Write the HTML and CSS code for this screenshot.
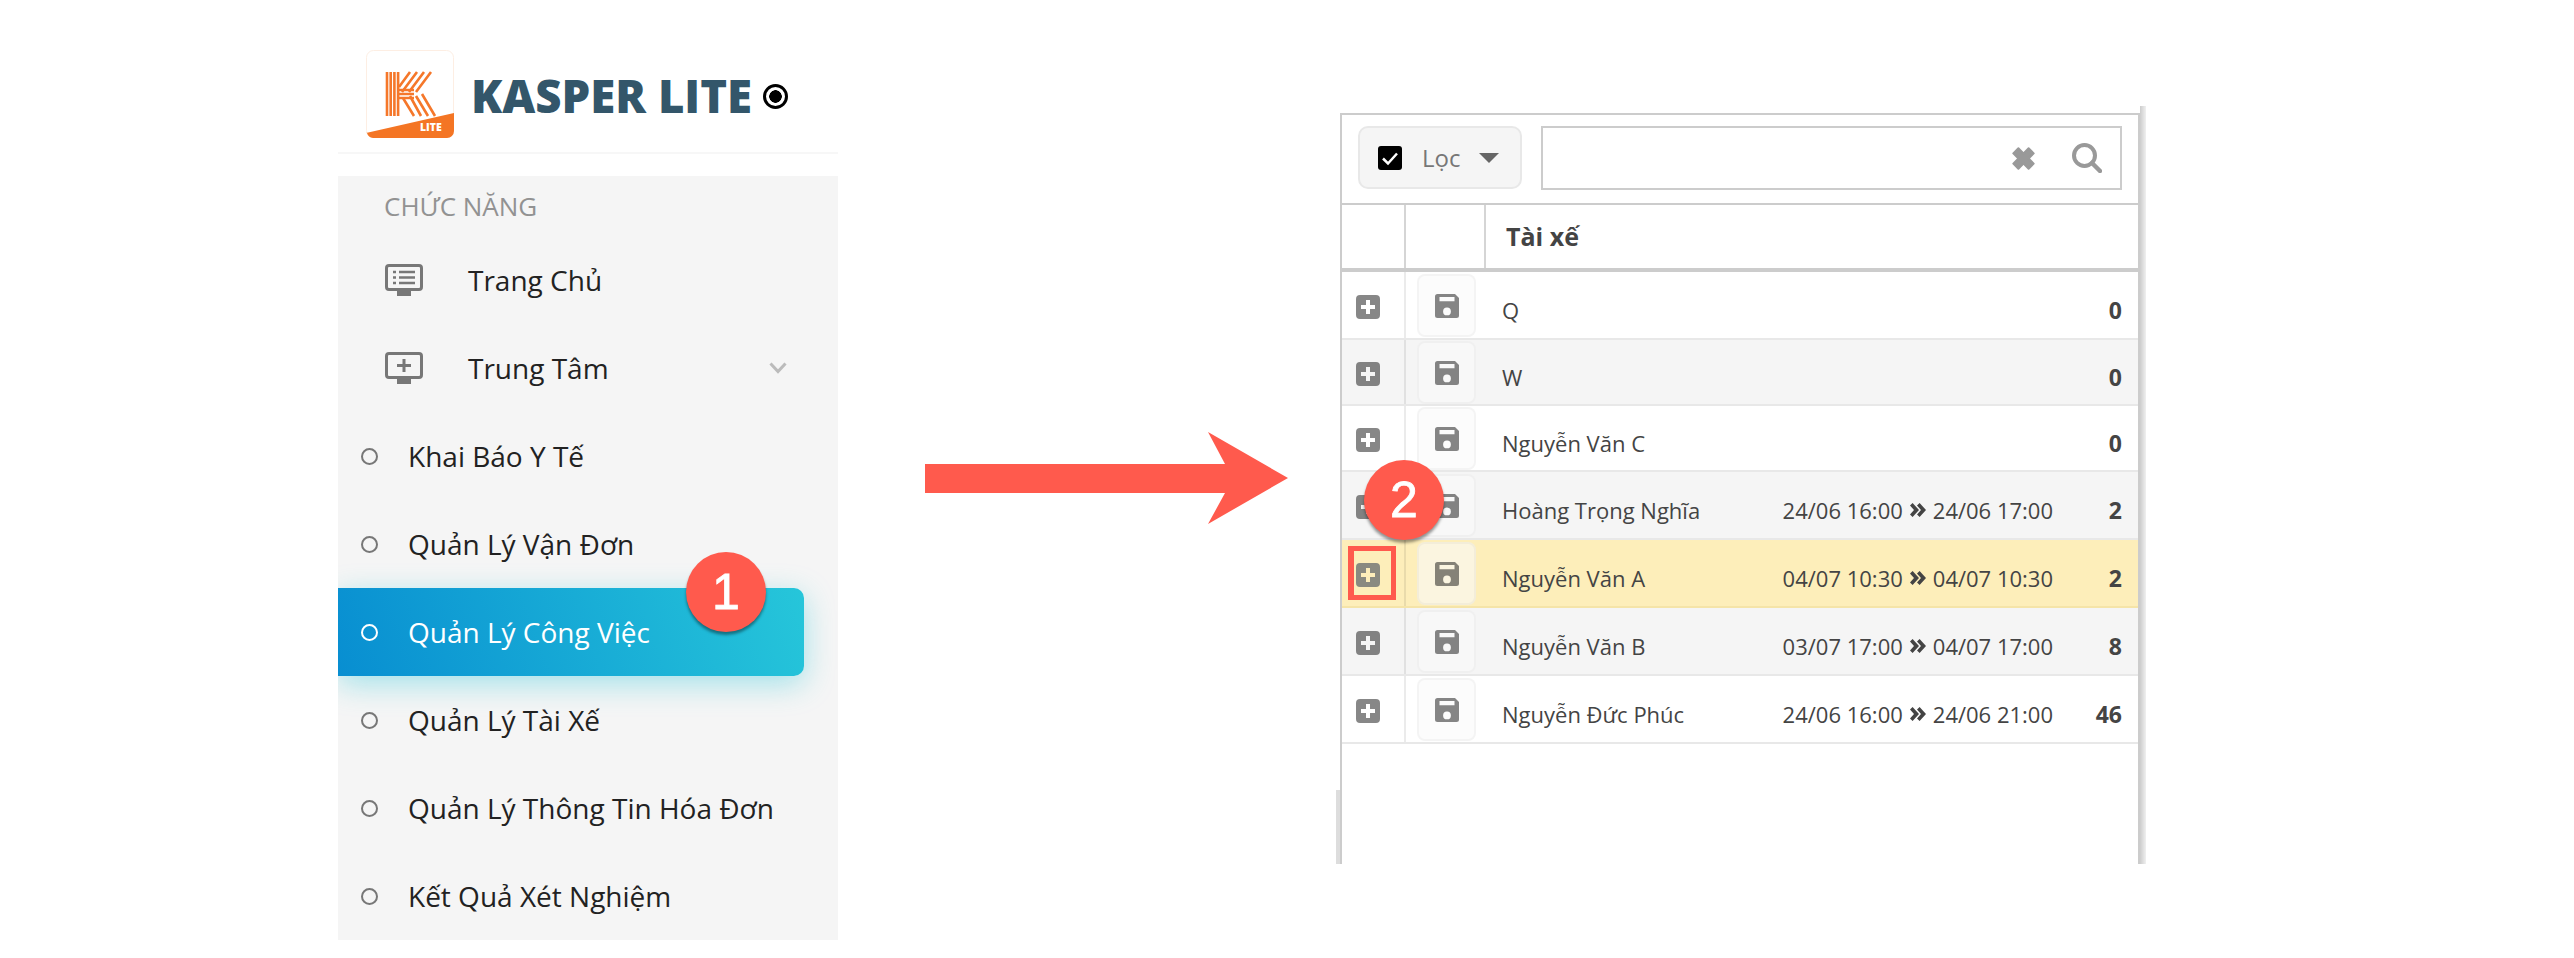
FILE: index.html
```html
<!DOCTYPE html>
<html lang="en">
<head>
  <meta charset="UTF-8">
  <meta name="viewport" content="width=device-width, initial-scale=1.0">
  <title>Kasper Lite - Quản Lý Công Việc</title>
  <link rel="stylesheet" href="styles.css">
</head>
<body>
  <svg class="sprites" width="0" height="0">
    <symbol id="i-plus" viewBox="0 0 24 24">
      <path fill-rule="evenodd" d="M4 0h16a4 4 0 0 1 4 4v16a4 4 0 0 1-4 4H4a4 4 0 0 1-4-4V4a4 4 0 0 1 4-4zM10 5v5H5v4h5v5h4v-5h5v-4h-5V5z"/>
    </symbol>
    <symbol id="i-save" viewBox="0 0 24 24">
      <path fill-rule="evenodd" d="M2.500 0H20l4 4v17.500a2.500 2.500 0 0 1-2.500 2.500h-19A2.500 2.500 0 0 1 0 21.500v-19A2.500 2.500 0 0 1 2.500 0zM4.500 3v4.300h15V3zM12 13.500a3.900 3.900 0 1 0 0 7.800 3.900 3.900 0 0 0 0-7.800z"/>
    </symbol>
    <symbol id="i-next" viewBox="0 0 16 14">
      <path d="M0 2.500 2.600 0 9 7 2.600 14 0 11.500 4 7zM7 2.500 9.600 0 16 7 9.600 14 7 11.500 11 7z"/>
    </symbol>
  </svg>

  <div class="page">
    <!-- left: sidebar -->
    <aside class="sidebar">
      <div class="brand">
        <svg class="logo" viewBox="0 0 88 88">
          <rect x="0.500" y="0.500" width="87" height="87" rx="7" fill="#fff" stroke="#fdeee3"/>
          <g stroke="#f5772a" stroke-width="2.600" fill="none">
            <path d="M21 22v44M24.700 22v44M28.400 22v44M32.100 22v44"/>
            <path d="M44 22 33 37M51 22 36 42M58 22 43 42M65 22 50 42"/>
            <path d="M33 40h15M33 44h15M33 48h15"/>
            <path d="M37 48 48 66M44 46 55 66M50 46 62 66M56 44 69 66"/>
          </g>
          <path d="M0 83 88 63v18a7 7 0 0 1-7 7H7a7 7 0 0 1-6-5z" fill="#f47524"/>
          <text class="logo-text" x="54" y="81">LITE</text>
        </svg>
        <span class="brand-name">KASPER LITE</span>
        <span class="brand-mark"></span>
      </div>

      <div class="menu">
        <div class="menu-title">CHỨC NĂNG</div>
        <div class="menu-item">
          <svg class="menu-icon" viewBox="0 0 38 32">
            <rect x="1.500" y="1.500" width="35" height="24" rx="2.500" fill="none" stroke="#777" stroke-width="3"/>
            <rect x="12" y="27" width="14" height="5" fill="#777"/>
            <path d="M8 8h3M14 8h16M8 13.500h3M14 13.500h16M8 19h3M14 19h16" stroke="#777" stroke-width="2.500"/>
          </svg>
          <span>Trang Chủ</span>
        </div>
        <div class="menu-item">
          <svg class="menu-icon" viewBox="0 0 38 32">
            <rect x="1.500" y="1.500" width="35" height="24" rx="2.500" fill="none" stroke="#777" stroke-width="3"/>
            <rect x="12" y="27" width="14" height="5" fill="#777"/>
            <path d="M12 13.500h14M19 7v13" stroke="#777" stroke-width="3"/>
          </svg>
          <span>Trung Tâm</span>
          <svg class="menu-chevron" viewBox="0 0 18 12">
            <path d="M1.500 1.500 9 9.500l7.500-8" fill="none" stroke="#bbb" stroke-width="3"/>
          </svg>
        </div>
        <div class="menu-sub"><i class="dot"></i><span>Khai Báo Y Tế</span></div>
        <div class="menu-sub"><i class="dot"></i><span>Quản Lý Vận Đơn</span></div>
        <div class="menu-sub active"><i class="dot"></i><span>Quản Lý Công Việc</span></div>
        <div class="menu-sub"><i class="dot"></i><span>Quản Lý Tài Xế</span></div>
        <div class="menu-sub"><i class="dot"></i><span>Quản Lý Thông Tin Hóa Đơn</span></div>
        <div class="menu-sub"><i class="dot"></i><span>Kết Quả Xét Nghiệm</span></div>
      </div>
      <div class="badge badge-one">1</div>
    </aside>

    <svg class="arrow" viewBox="0 0 364 92">
      <path d="M0 32H300L283 0 363 46 283 92 300 61H0z" fill="#ff5a4d"/>
    </svg>

    <!-- right: driver table -->
    <section class="panel">
      <div class="toolbar">
        <div class="filter">
          <span class="check">
            <svg viewBox="0 0 24 24"><path d="M5 12.500 10 17.500 19 7.500" fill="none" stroke="#fff" stroke-width="2.500"/></svg>
          </span>
          <span class="filter-label">Lọc</span>
          <span class="caret"></span>
        </div>
        <div class="search">
          <svg class="search-clear" viewBox="2 2 18 18">
            <path d="M3 7 7 3l4 4 4-4 4 4-4 4 4 4-4 4-4-4-4 4-4-4 4-4z" fill="#999" stroke="#999" stroke-width="1.500" stroke-linejoin="round"/>
          </svg>
          <svg class="search-go" viewBox="0 0 30 30">
            <circle cx="12.500" cy="12.500" r="10.500" fill="none" stroke="#999" stroke-width="4"/>
            <path d="M20 20l8 8" stroke="#999" stroke-width="4.500" stroke-linecap="round"/>
          </svg>
        </div>
      </div>

      <div class="head">
        <div class="head-cell"></div>
        <div class="head-cell wide"></div>
        <div class="head-title">Tài xế</div>
      </div>

      <div class="row tall">
        <div class="c-plus"><svg class="ico"><use href="#i-plus"/></svg></div>
        <div class="c-save"><span class="save"><svg class="ico"><use href="#i-save"/></svg></span></div>
        <div class="c-name">Q</div>
        <div class="c-count">0</div>
      </div>
      <div class="row alt">
        <div class="c-plus"><svg class="ico"><use href="#i-plus"/></svg></div>
        <div class="c-save"><span class="save"><svg class="ico"><use href="#i-save"/></svg></span></div>
        <div class="c-name">W</div>
        <div class="c-count">0</div>
      </div>
      <div class="row">
        <div class="c-plus"><svg class="ico"><use href="#i-plus"/></svg></div>
        <div class="c-save"><span class="save"><svg class="ico"><use href="#i-save"/></svg></span></div>
        <div class="c-name">Nguyễn Văn C</div>
        <div class="c-count">0</div>
      </div>
      <div class="row tall alt">
        <div class="c-plus"><svg class="ico"><use href="#i-plus"/></svg></div>
        <div class="c-save"><span class="save"><svg class="ico"><use href="#i-save"/></svg></span></div>
        <div class="c-name">Hoàng Trọng Nghĩa</div>
        <div class="c-date">24/06 16:00<svg class="next"><use href="#i-next"/></svg>24/06 17:00</div>
        <div class="c-count">2</div>
      </div>
      <div class="row tall picked">
        <div class="c-plus"><svg class="ico"><use href="#i-plus"/></svg></div>
        <div class="c-save"><span class="save"><svg class="ico"><use href="#i-save"/></svg></span></div>
        <div class="c-name">Nguyễn Văn A</div>
        <div class="c-date">04/07 10:30<svg class="next"><use href="#i-next"/></svg>04/07 10:30</div>
        <div class="c-count">2</div>
      </div>
      <div class="row tall alt">
        <div class="c-plus"><svg class="ico"><use href="#i-plus"/></svg></div>
        <div class="c-save"><span class="save"><svg class="ico"><use href="#i-save"/></svg></span></div>
        <div class="c-name">Nguyễn Văn B</div>
        <div class="c-date">03/07 17:00<svg class="next"><use href="#i-next"/></svg>04/07 17:00</div>
        <div class="c-count">8</div>
      </div>
      <div class="row tall">
        <div class="c-plus"><svg class="ico"><use href="#i-plus"/></svg></div>
        <div class="c-save"><span class="save"><svg class="ico"><use href="#i-save"/></svg></span></div>
        <div class="c-name">Nguyễn Đức Phúc</div>
        <div class="c-date">24/06 16:00<svg class="next"><use href="#i-next"/></svg>24/06 21:00</div>
        <div class="c-count">46</div>
      </div>

      <div class="mark-box"></div>
      <div class="badge badge-two">2</div>
    </section>
  </div>
</body>
</html>
```

FILE: styles.css
```css
body {
  margin: 0;
  background: #fff;
  font-family: "Open Sans", sans-serif;
  overflow: hidden;
}

.sprites {
  display: none;
}

.page {
  display: flex;
  align-items: flex-start;
  height: 958px;
  padding-left: 338px;
  box-sizing: border-box;
}

/* sidebar */
.sidebar {
  position: relative;
  flex: 0 0 500px;
}

.brand {
  display: flex;
  align-items: center;
  height: 102px;
  padding: 50px 0 0 28px;
  margin-bottom: 22px;
  border-bottom: 2px solid #f7f7f7;
}

.logo {
  width: 88px;
  height: 88px;
  margin-bottom: 14px;
}

.logo-text {
  fill: #fff;
  font-family: "Open Sans", sans-serif;
  font-size: 10.500px;
  font-weight: 800;
}

.brand-name {
  margin: 0 0 12px 17px;
  color: #33566a;
  font-size: 45.500px;
  font-weight: 800;
  line-height: 88px;
}

.brand-mark {
  width: 25px;
  height: 25px;
  margin: 0 0 10px 11px;
  box-sizing: border-box;
  border: 3px solid #000;
  border-radius: 50%;
  background: radial-gradient(circle, #000 0 6px, #fff 6.500px);
}

.menu {
  background: #f5f5f5;
  height: 764px;
  overflow: hidden;
}

.menu-title {
  height: 60px;
  padding-left: 46px;
  color: #929292;
  font-size: 26px;
  line-height: 61px;
}

.menu-item,
.menu-sub {
  display: flex;
  align-items: center;
  height: 88px;
  color: #222;
  font-size: 28px;
}

.menu-item {
  padding-left: 47px;
}

.menu-item span {
  margin-left: 45px;
}

.menu-icon {
  width: 38px;
  height: 32px;
}

.menu-chevron {
  width: 18px;
  height: 12px;
  margin-left: auto;
  margin-right: 51px;
}

.menu-sub {
  padding-left: 23px;
}

.dot {
  width: 17px;
  height: 17px;
  margin-right: 30px;
  box-sizing: border-box;
  border: 2px solid #777;
  border-radius: 50%;
}

.menu-sub.active {
  width: 466px;
  box-sizing: border-box;
  color: #fff;
  border-radius: 0 10px 10px 0;
  background: linear-gradient(70deg, #088ed1, #26c6da);
  box-shadow: 0 8px 30px rgba(38, 198, 218, 0.4);
}

.menu-sub.active .dot {
  border-color: #fff;
}

.badge {
  position: absolute;
  width: 80px;
  height: 80px;
  border-radius: 50%;
  background: #ff5a4d;
  box-shadow: 0 3px 3px rgba(0, 0, 0, 0.4);
  color: #fff;
  font-family: "Liberation Sans", sans-serif;
  font-size: 50px;
  line-height: 80px;
  text-align: center;
  -webkit-text-stroke: 0.8px #fff;
}

.badge-one {
  left: 348px;
  top: 552px;
}

.badge-two {
  left: 22px;
  top: 345px;
}

.arrow {
  flex: 0 0 364px;
  height: 92px;
  margin: 432px 0 0 87px;
}

/* driver table */
.panel {
  position: relative;
  flex: 0 0 800px;
  height: 751px;
  margin: 113px 0 0 51px;
  box-sizing: border-box;
  border: 2px solid #ccc;
  border-bottom: 0;
}

.panel::before {
  content: "";
  position: absolute;
  left: -6px;
  top: 675px;
  bottom: 0;
  width: 4px;
  background: #ddd;
}

.panel::after {
  content: "";
  position: absolute;
  right: -8px;
  top: -9px;
  bottom: 0;
  width: 6px;
  background: linear-gradient(90deg, #ccc, #f0f0f0);
}

.toolbar {
  display: flex;
  align-items: flex-start;
  gap: 19px;
  height: 90px;
  padding: 11px 16px 0;
  box-sizing: border-box;
  border-bottom: 2px solid #ccc;
}

.filter {
  display: flex;
  align-items: center;
  width: 164px;
  height: 63px;
  padding-left: 18px;
  box-sizing: border-box;
  border: 2px solid #e8e8e8;
  border-radius: 10px;
  background: #f5f5f5;
}

.check {
  width: 24px;
  height: 24px;
  border-radius: 3px;
  background: #000;
}

.check svg {
  display: block;
}

.filter-label {
  margin-left: 20px;
  color: #777;
  font-size: 24px;
}

.caret {
  margin-left: 19px;
  border-top: 10px solid #666;
  border-left: 10px solid transparent;
  border-right: 10px solid transparent;
}

.search {
  display: flex;
  align-items: center;
  justify-content: flex-end;
  flex: 1;
  height: 64px;
  padding-right: 18px;
  box-sizing: border-box;
  border: 2px solid #ccc;
}

.search-clear {
  width: 23px;
  height: 23px;
  margin-right: 37px;
}

.search-go {
  width: 30px;
  height: 30px;
}

.head {
  display: flex;
  height: 67px;
  box-sizing: border-box;
  border-bottom: 4px solid #ccc;
}

.head-cell {
  width: 62px;
  border-right: 2px solid #d5d5d5;
}

.head-cell.wide {
  width: 78px;
}

.head-title {
  padding-left: 20px;
  color: #444;
  font-size: 25px;
  font-weight: 700;
  line-height: 63px;
}

.row {
  display: flex;
  align-items: center;
  height: 66px;
  box-sizing: border-box;
  border-bottom: 2px solid #e8e8e8;
  color: #444;
  font-size: 22px;
}

.row.tall {
  height: 68px;
}

.row.alt {
  background: #f5f5f5;
}

.row.picked {
  background: #fdeeba;
  border-bottom-color: #f5e4a8;
}

.ico {
  display: block;
  width: 24px;
  height: 24px;
  fill: #000;
  fill-opacity: 0.47;
}

.picked .c-plus .ico {
  fill: #8a8a80;
  fill-opacity: 1;
}

.c-plus {
  display: flex;
  align-self: stretch;
  align-items: center;
  flex: 0 0 64px;
  padding: 4px 0 0 14px;
  box-sizing: border-box;
  border-right: 2px solid rgba(0, 0, 0, 0.08);
}

.c-save {
  flex: 0 0 78px;
  padding-left: 11px;
  box-sizing: border-box;
}

.save {
  display: flex;
  align-items: center;
  justify-content: center;
  width: 59px;
  height: 63px;
  padding-top: 2px;
  box-sizing: border-box;
  border: 2px solid rgba(0, 0, 0, 0.03);
  border-radius: 8px;
  background: rgba(250, 250, 250, 0.6);
}

.c-name {
  flex: 1;
  padding: 10px 0 0 18px;
}

.c-date {
  display: flex;
  align-items: center;
  padding-top: 10px;
}

.next {
  width: 16px;
  height: 14px;
  margin: 0 7px;
  fill: #444;
}

.c-count {
  margin-left: auto;
  flex: 0 0 85px;
  padding: 10px 16px 0 0;
  box-sizing: border-box;
  font-size: 23px;
  font-weight: 700;
  text-align: right;
}

.mark-box {
  position: absolute;
  left: 6px;
  top: 431px;
  width: 48px;
  height: 54px;
  box-sizing: border-box;
  border: 5px solid #ff5a4d;
  border-left-width: 6px;
}
```
